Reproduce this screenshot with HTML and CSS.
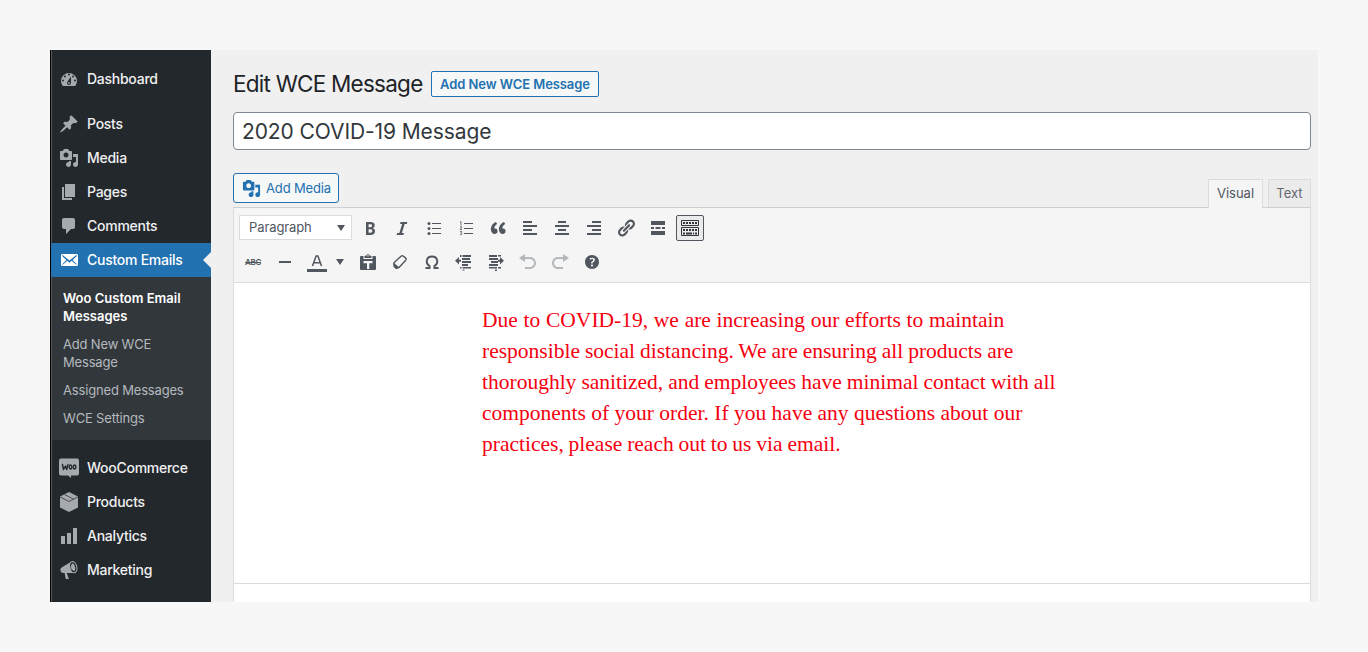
FILE: index.html
```html
<!DOCTYPE html>
<html lang="en">
<head>
<meta charset="utf-8">
<title>Edit WCE Message</title>
<link rel="stylesheet" href="styles.css">
</head>
<body>
<div class="app">
  <nav class="sidebar">
    <a class="item dashboard"><svg viewBox="0 0 20 20"><path d="M3.76 17h12.48A8 8 0 1 0 3.760 17z"/><g fill="#23282d"><circle cx="10" cy="5.500" r="1"/><circle cx="6" cy="7.500" r="1"/><circle cx="14" cy="7.500" r="1"/><circle cx="4" cy="11.500" r="1"/><circle cx="16" cy="11.500" r="1"/><path d="M8.600 12.500L12 7.500V14a2 2 0 1 1-3.400-1.500z"/></g><circle cx="10" cy="14" r=".9"/></svg><span>Dashboard</span></a>
    <a class="item"><svg viewBox="0 0 20 20"><path d="M10.44 3.02l1.82-1.82 6.36 6.35-1.83 1.82c-1.05-.68-2.48-.57-3.41.36l-.75.75c-.92.93-1.04 2.35-.35 3.41l-1.83 1.82-2.41-2.41-2.8 2.79c-.42.42-3.38 2.71-3.8 2.29s1.86-3.39 2.28-3.81l2.79-2.79L4.1 9.36l1.83-1.82c1.05.69 2.48.57 3.4-.36l.75-.75c.93-.92 1.05-2.35.36-3.41z"/></svg><span>Posts</span></a>
    <a class="item"><svg viewBox="0 0 20 20"><path d="M13 11V4c0-.55-.45-1-1-1h-1.67L9 1H5L3.67 3H2c-.55 0-1 .45-1 1v7c0 .55.45 1 1 1h10c.55 0 1-.45 1-1zM7 4.5c1.38 0 2.5 1.12 2.5 2.5S8.38 9.5 7 9.5 4.5 8.38 4.5 7 5.62 4.5 7 4.5zM14 6h5v10.5c0 1.38-1.12 2.5-2.5 2.5S14 17.88 14 16.5s1.12-2.5 2.5-2.5c.17 0 .34.02.5.05V9h-3V6zm-4 8.05V13h2v3.5c0 1.38-1.12 2.5-2.5 2.5S7 17.88 7 16.5 8.12 14 9.5 14c.17 0 .34.02.5.05z"/></svg><span>Media</span></a>
    <a class="item"><svg viewBox="0 0 20 20"><path d="M6 15V2h10v13H6zm-1 1h8v2H3V5h2v11z"/></svg><span>Pages</span></a>
    <a class="item"><svg viewBox="0 0 20 20"><path d="M5 2h9c1.1 0 2 .9 2 2v7c0 1.1-.9 2-2 2h-2l-5 5v-5H5c-1.1 0-2-.9-2-2V4c0-1.1.9-2 2-2z"/></svg><span>Comments</span></a>
    <a class="item current"><svg viewBox="0 0 20 20"><path d="M19 14.5v-9c0-.83-.67-1.5-1.5-1.5H3.49c-.83 0-1.5.67-1.5 1.5v9c0 .83.67 1.5 1.5 1.5H17.5c.83 0 1.5-.67 1.5-1.5zm-1.31-9.11c.33.33.15.67-.03.84L13.6 9.95l3.9 4.06c.12.14.2.36.06.51-.13.16-.43.15-.56.05l-4.37-3.73-2.14 1.95-2.13-1.95-4.37 3.73c-.13.1-.43.11-.56-.05-.14-.15-.06-.37.06-.51l3.9-4.06-4.06-3.72c-.18-.17-.36-.51-.03-.84s.67-.17.95.07l6.24 5.04 6.25-5.04c.28-.24.62-.4.95-.07z"/></svg><span>Custom Emails</span></a>
    <div class="submenu">
      <a class="active">Woo Custom Email<br>Messages</a>
      <a>Add New WCE<br>Message</a>
      <a>Assigned Messages</a>
      <a>WCE Settings</a>
    </div>
    <a class="item"><svg viewBox="0 0 20 20"><path d="M2 .5h16a2 2 0 0 1 2 2v13a2 2 0 0 1-2 2h-6V20L9 17.500H2a2 2 0 0 1-2-2v-13a2 2 0 0 1 2-2z"/><g fill="none" stroke="#23282d" stroke-width="1.400" stroke-linejoin="round" stroke-linecap="round"><path d="M3.500 6.500l1 5L6.500 8l1.200 3.500L9 6.500"/><ellipse cx="11.600" cy="9" rx="1.300" ry="2"/><ellipse cx="15.600" cy="9" rx="1.300" ry="2"/></g></svg><span>WooCommerce</span></a>
    <a class="item"><svg viewBox="0 0 20 20"><path d="M10 0l9 4.500V15.500L10 20 1 15.500V4.500z"/><path d="M1 4.900l9 4.600 9-4.600M5.500 2.400l9 4.800" fill="none" stroke="#23282d" stroke-width=".7"/></svg><span>Products</span></a>
    <a class="item"><svg viewBox="0 0 20 20"><path d="M18 18V2h-4v16h4zm-6 0V7H8v11h4zm-6 0v-8H2v8h4z"/></svg><span>Analytics</span></a>
    <a class="item"><svg viewBox="0 0 20 20"><path d="M12.500 1.500L3 7.200q-2 1-1.600 3.400.7 2.600 2.900 2.500h1.300l1 5.500q.1.500.6.500h2.200q.5 0 .4-.5L7.700 13.100h7.600z"/><ellipse cx="14.300" cy="7.200" rx="4" ry="6.200" transform="rotate(-14 14.300 7.200)"/><ellipse cx="14.300" cy="7.200" rx="2.300" ry="4.400" transform="rotate(-14 14.300 7.200)" fill="none" stroke="#23282d" stroke-width="1.200"/><ellipse cx="13.400" cy="7.400" rx="1.500" ry="2.600" transform="rotate(-14 13.400 7.400)"/></svg><span>Marketing</span></a>
  </nav>
  <main class="main">
    <header class="heading"><h1>Edit WCE Message</h1><a class="add-new">Add New WCE Message</a></header>
    <div class="title-field">2020 COVID-19 Message</div>
    <div class="tools">
      <a class="add-media"><svg viewBox="0 0 20 20"><path d="M13 11V4c0-.55-.45-1-1-1h-1.670L9 1H5L3.670 3H2c-.55 0-1 .45-1 1v7c0 .55.45 1 1 1h10c.55 0 1-.45 1-1zM7 4.500c1.380 0 2.500 1.120 2.500 2.500S8.380 9.500 7 9.500 4.500 8.380 4.500 7 5.620 4.500 7 4.500zM14 6h5v10.500c0 1.380-1.120 2.500-2.500 2.500S14 17.880 14 16.500s1.120-2.500 2.500-2.500c.17 0 .34.020.5.050V9h-3V6zm-4 8.050V13h2v3.500c0 1.380-1.120 2.500-2.500 2.500S7 17.880 7 16.500 8.120 14 9.500 14c.17 0 .34.020.5.050z"/></svg><span>Add Media</span></a>
      <div class="tabs"><a class="tab on">Visual</a><a class="tab">Text</a></div>
    </div>
    <section class="editor">
      <div class="toolbar">
        <div class="row">
          <div class="select"><span>Paragraph</span><i class="caret"></i></div>
          <b class="btn"><svg viewBox="0 0 20 20"><path d="M6 4v13h4.540c1.370 0 2.460-.33 3.260-1 .8-.66 1.200-1.580 1.200-2.770 0-.84-.17-1.510-.51-2.010s-.9-.85-1.670-1.030v-.09c.57-.1 1.020-.4 1.360-.9s.51-1.130.51-1.910c0-1.140-.39-1.980-1.170-2.500C12.750 4.260 11.500 4 9.780 4H6zm2.570 5.150V6.260h1.360c.73 0 1.270.11 1.610.32.34.22.51.58.51 1.070 0 .54-.16.92-.47 1.150s-.82.35-1.510.35h-1.500zm0 2.190h1.600c1.440 0 2.160.53 2.160 1.610 0 .6-.17 1.050-.51 1.340s-.86.43-1.570.43H8.570v-3.380z"/></svg></b>
          <b class="btn"><svg viewBox="0 0 20 20"><path d="M14.780 6h-2.130l-2.800 9h2.120l-.62 2H4.600l.62-2h2.140l2.800-9H8.030l.62-2h6.750z"/></svg></b>
          <b class="btn"><svg viewBox="0 0 20 20"><circle cx="5" cy="5.500" r="1.500"/><circle cx="5" cy="10.500" r="1.500"/><circle cx="5" cy="15.500" r="1.500"/><path d="M8 5h9v1H8zM8 10h9v1H8zM8 15h9v1H8z"/></svg></b>
          <b class="btn"><svg viewBox="0 0 20 20"><path d="M8 5h9v1H8zM8 10h9v1H8zM8 15h9v1H8z"/><path d="M4 4l1-.5v4M4 9q1.500-1 1.800 0 0 .8-1.800 2.500h2M4 13.500h1.800l-1 1.300q1.200 0 1.200 1t-2 .9" fill="none" stroke="#50575e" stroke-width=".8"/></svg></b>
          <b class="btn"><svg viewBox="0 0 20 20"><path d="M9.490 13.220c0-.74-.2-1.380-.61-1.900-.62-.78-1.830-.88-2.530-.72-.29-1.650 1.110-3.750 2.920-4.650L7.880 4c-2.730 1.300-5.420 4.280-4.960 8.050C3.210 14.430 4.590 16 6.540 16c.85 0 1.560-.25 2.120-.75s.83-1.180.83-2.030zm8.050 0c0-.74-.2-1.380-.61-1.900-.63-.78-1.830-.88-2.530-.72-.29-1.650 1.110-3.750 2.920-4.650L15.930 4c-2.730 1.300-5.410 4.280-4.950 8.050.29 2.380 1.660 3.950 3.610 3.950.85 0 1.560-.25 2.120-.75s.83-1.180.83-2.030z"/></svg></b>
          <b class="btn"><svg viewBox="0 0 20 20"><path d="M3 3h9v2H3zM3 7h14v2H3zM3 11h9v2H3zM3 15h14v2H3z"/></svg></b>
          <b class="btn"><svg viewBox="0 0 20 20"><path d="M6 3h8v2H6zM3 7h14v2H3zM6 11h8v2H6zM3 15h14v2H3z"/></svg></b>
          <b class="btn"><svg viewBox="0 0 20 20"><path d="M8 3h9v2H8zM3 7h14v2H3zM8 11h9v2H8zM3 15h14v2H3z"/></svg></b>
          <b class="btn"><svg viewBox="0 0 20 20"><path d="M17.740 2.760c1.680 1.690 1.680 4.410 0 6.100l-1.530 1.520c-1.120 1.120-2.700 1.470-4.140 1.090l2.620-2.610.76-.77.76-.76c.84-.84.84-2.200 0-3.040-.84-.85-2.200-.85-3.040 0l-.77.76-3.380 3.380c-.37-1.440-.02-3.020 1.100-4.140l1.520-1.530c1.690-1.680 4.420-1.680 6.100 0zM8.590 13.430l5.340-5.340c.42-.42.42-1.100 0-1.520-.44-.43-1.130-.39-1.530 0l-5.330 5.340c-.42.42-.42 1.100 0 1.520.44.43 1.130.39 1.520 0zm-.76 2.290l4.140-4.150c.38 1.440.03 3.020-1.090 4.140l-1.520 1.530c-1.690 1.680-4.410 1.680-6.100 0-1.680-1.680-1.680-4.420 0-6.100l1.530-1.520c1.120-1.120 2.700-1.470 4.140-1.100l-4.140 4.150c-.85.84-.85 2.200 0 3.050.84.84 2.200.84 3.040 0z"/></svg></b>
          <b class="btn"><svg viewBox="0 0 20 20"><path d="M3 3h14v4H3zM3 13h14v4H3zM3 9h3v2H3zM7.500 9h5v2h-5zM14 9h3v2h-3z"/></svg></b>
          <b class="btn pressed"><svg viewBox="0 0 20 20"><g fill="none" stroke="#32373c"><path d="M1.500 2.500h17v5h-17zM1.500 9.500h17v8h-17z"/><path d="M3 5h14" stroke-width="2" stroke-dasharray="2 1"/><path d="M3 12h14" stroke-width="2" stroke-dasharray="2 1"/><path d="M3 15.500h2m1 0h6m1 0h1m1 0h2" stroke-width="2"/></g></svg></b>
        </div>
        <div class="row second">
          <b class="btn abc">ABC</b>
          <b class="btn"><svg viewBox="0 0 20 20"><path d="M4 9h12v2H4z"/></svg></b>
          <b class="btn"><svg viewBox="0 0 20 20"><path d="M5.500 14L9.100 4h1.800l3.600 10M6.700 10.800h6.600" fill="none" stroke="#50575e" stroke-width="1.500"/><path d="M0 17h20v3H0z"/></svg></b>
          <b class="drop"><i class="caret"></i></b>
          <b class="btn"><svg viewBox="0 0 20 20"><path fill-rule="evenodd" d="M3 4h2.500v3h9V4H17a1 1 0 0 1 1 1v12a1 1 0 0 1-1 1H3a1 1 0 0 1-1-1V5a1 1 0 0 1 1-1zm2.500 5v2.300H9V17h2.300v-5.700h3.200V9zM6.500 6V4L8.200 3.500a1.900 1.900 0 0 1 3.600 0L13.500 4v2zM10 3a.8.8 0 1 0 0 1.600A.8.800 0 0 0 10 3z"/></svg></b>
          <b class="btn"><svg viewBox="0 0 20 20"><path d="M4.200 10.500l6.800-6.200q1.200-1 2.500 0l2 1.600q1.300 1.100.2 2.400L9.500 15q-1 1.200-2.300.4L4.300 13q-1-1-.1-2.500z" fill="none" stroke="#50575e" stroke-width="1.400"/><path d="M3.800 10.800l5 4.200-1.300 2H5.700L3.300 14.500z"/></svg></b>
          <b class="btn"><svg viewBox="0 0 20 20"><path d="M3.500 16h4v-2C3 11 4.200 4.500 10 4.500S17 11 12.500 14v2h4" fill="none" stroke="#50575e" stroke-width="2"/></svg></b>
          <b class="btn"><svg viewBox="0 0 20 20"><path d="M6 3h1.500v2H6zM8.500 3H17v2H8.500zM8 6h8v2H8zM8 9h9v2H8zM8 12h6v2H8zM6 15h1.500v1.500H6zM8.500 15H17v1.500H8.500zM8.500 17.500h2v1h-2zM5 5v2.800h2v1.900H5v2.800L1 8.800z"/></svg></b>
          <b class="btn"><svg viewBox="0 0 20 20"><path d="M3 3h8v2H3zM12 3h3v1.500h-3zM3 6h9v2H3zM5 9h7v2H5zM3 12h9v2H3zM3 15h8v1.500H3zM12 15h3v1.500h-3zM9 17.500h2v1.500H9zM14 5v2.800h-2v1.900h2v2.800l4-3.700z"/></svg></b>
          <b class="btn disabled"><svg viewBox="0 0 20 20"><path d="M12 5H7V2L1 6l6 4V7h5c2.200 0 4 1.800 4 4s-1.800 4-4 4H7v2h5c3.300 0 6-2.700 6-6s-2.700-6-6-6z"/></svg></b>
          <b class="btn disabled"><svg viewBox="0 0 20 20"><path d="M8 5h5V2l6 4-6 4V7H8c-2.200 0-4 1.800-4 4s1.800 4 4 4h5v2H8c-3.300 0-6-2.700-6-6s2.700-6 6-6z"/></svg></b>
          <b class="btn"><svg viewBox="0 0 20 20"><path d="M17 10c0-3.870-3.140-7-7-7-3.870 0-7 3.130-7 7s3.130 7 7 7c3.860 0 7-3.130 7-7zm-6.300 1.480H9.140v-.43c0-.38.080-.7.240-.98s.46-.57.880-.89c.41-.29.680-.53.810-.71.140-.18.200-.39.200-.62 0-.25-.09-.44-.28-.58-.19-.13-.45-.19-.79-.19-.58 0-1.250.19-2 .57l-.64-1.280c.87-.49 1.800-.74 2.770-.74.810 0 1.450.2 1.920.58.480.39.710.91.710 1.550 0 .43-.09.8-.29 1.110-.19.32-.57.670-1.110 1.060-.38.280-.61.490-.71.630-.1.150-.15.340-.15.570v.35zm-1.470 2.740c-.18-.17-.27-.42-.27-.73 0-.33.080-.58.260-.75s.43-.25.770-.25c.32 0 .57.090.75.260s.27.42.27.740c0 .3-.09.550-.27.720-.18.180-.43.270-.75.270-.33 0-.58-.09-.76-.26z"/></svg></b>
        </div>
      </div>
      <div class="content">
        <p><span class="l1">Due to COVID-19, we are increasing our efforts to maintain</span><span class="l2">responsible social distancing. We are ensuring all products are</span><span class="l3">thoroughly sanitized, and employees have minimal contact with all</span><span class="l4">components of your order. If you have any questions about our</span><span class="l5">practices, please reach out to us via email.</span></p>
      </div>
      <div class="status"></div>
    </section>
  </main>
</div>
</body>
</html>
```
FILE: styles.css
```css
* { box-sizing: border-box; }
body { margin: 0; height: 652px; padding: 50px; background: #f7f7f7; font-family: Inter, "Liberation Sans", sans-serif; overflow: hidden; }
svg { display: block; width: 20px; height: 20px; fill: currentColor; overflow: visible; }
.app { display: flex; width: 1268px; height: 552px; overflow: hidden; background: #f0f0f1; }
.sidebar { width: 161px; flex: none; padding-top: 12px; background: #23282d; border-left: 1px solid #000; box-shadow: inset 1px 0 #50575b; }
.item { display: flex; align-items: center; height: 34px; padding-left: 8px; gap: 8px; color: #f0f0f1; font-size: 14px; font-weight: 450; letter-spacing: -.26px; white-space: nowrap; }
.item span { padding-bottom: 2px; }
.item svg { color: #a7aaad; }
.dashboard { margin-bottom: 11px; }
.current { position: relative; background: #2271b1; color: #fff; }
.current svg { color: #fff; }
.current::after { content: ""; position: absolute; right: 0; top: 9px; border: 8px solid transparent; border-left: 0; border-right-color: #f0f0f1; }
.submenu { height: 163px; margin-bottom: 11px; padding-top: 7px; background: #32373c; box-shadow: inset 1px 0 #50575b; }
.submenu a { display: block; padding: 5px 12px; font-size: 13px; line-height: 18px; letter-spacing: -.17px; color: #b4b9be; white-space: nowrap; }
.submenu .active { color: #fff; font-weight: 600; letter-spacing: 0; }
.main { flex: 1; padding: 21px 7px 0 22px; }
.heading { display: flex; height: 26px; align-items: center; gap: 9px; }
h1 { margin: 0; width: 189px; padding-bottom: 2px; font-size: 22.5px; font-weight: 400; letter-spacing: -.76px; color: #1d2327; white-space: nowrap; }
.add-new { display: flex; align-items: center; justify-content: center; width: 168px; height: 26px; border: 1px solid #2271b1; border-radius: 2px; background: #f6f7f7; color: #2271b1; font-size: 13px; font-weight: 600; letter-spacing: -.08px; white-space: nowrap; }
.title-field { height: 38px; margin-top: 15px; padding-left: 8px; border: 1px solid #7e8993; border-radius: 4px; background: #fff; color: #32373c; font-size: 21px; letter-spacing: -.1px; line-height: 37px; }
.tools { display: flex; justify-content: space-between; height: 34px; margin-top: 23px; }
.add-media { display: flex; align-items: center; width: 106px; height: 30px; padding-left: 8px; gap: 5px; border: 1px solid #2271b1; border-radius: 3px; background: #f6f7f7; color: #2271b1; font-size: 13px; letter-spacing: -.15px; white-space: nowrap; }
.add-media svg { width: 19px; height: 19px; }
.tabs { display: flex; gap: 5px; padding-top: 6px; }
.tab { width: 43px; height: 28px; border: 1px solid #dcdcde; border-bottom: 0; background: #ebebeb; color: #646970; font-size: 13px; line-height: 27px; text-align: center; }
.tab.on { position: relative; z-index: 1; width: 55px; height: 29px; background: #f5f5f5; color: #50575e; }
.editor { height: 395px; border: 1px solid #dcdcde; border-top-color: #ccd0d4; border-bottom: 0; background: #fff; }
.toolbar { height: 75px; padding: 3px 5px 4px; background: #f5f5f5; border-bottom: 1px solid #dcdcde; color: #50575e; }
.row { display: flex; align-items: center; height: 33px; gap: 4px; }
.second { height: 35px; }
.select { display: flex; align-items: center; justify-content: space-between; width: 113px; height: 25px; padding: 0 6px 0 9px; border: 1px solid #dcdcde; background: #fff; font-size: 13px; letter-spacing: -.1px; }
.select span { padding-bottom: 1px; }
.caret { border: 4.5px solid transparent; border-top: 6px solid #50575e; border-bottom: 0; }
.btn { display: flex; flex: none; align-items: center; justify-content: center; width: 28px; height: 26px; font-weight: 400; }
.pressed { border: 1px solid #50575e; border-radius: 2px; background: #ebebeb; color: #32373c; }
.abc { font-size: 8px; font-weight: 600; letter-spacing: -.4px; text-decoration: line-through; }
.drop { display: flex; width: 15px; margin: 0 3px 0 -3px; justify-content: center; }
.disabled { color: #b5b8bb; }
.content { height: 301px; padding: 22px 0 0 248px; border-bottom: 1px solid #dcdcde; }
p { margin: 0; color: #f5000f; font: 21.5px/31px "Liberation Serif", serif; }
p span { display: block; white-space: nowrap; }
.l1 { word-spacing: .35px; }
.l2 { word-spacing: -.4px; }
.l3 { word-spacing: -.35px; }
.l5 { word-spacing: -.55px; }
.status { height: 18px; background: #fff; }
```
